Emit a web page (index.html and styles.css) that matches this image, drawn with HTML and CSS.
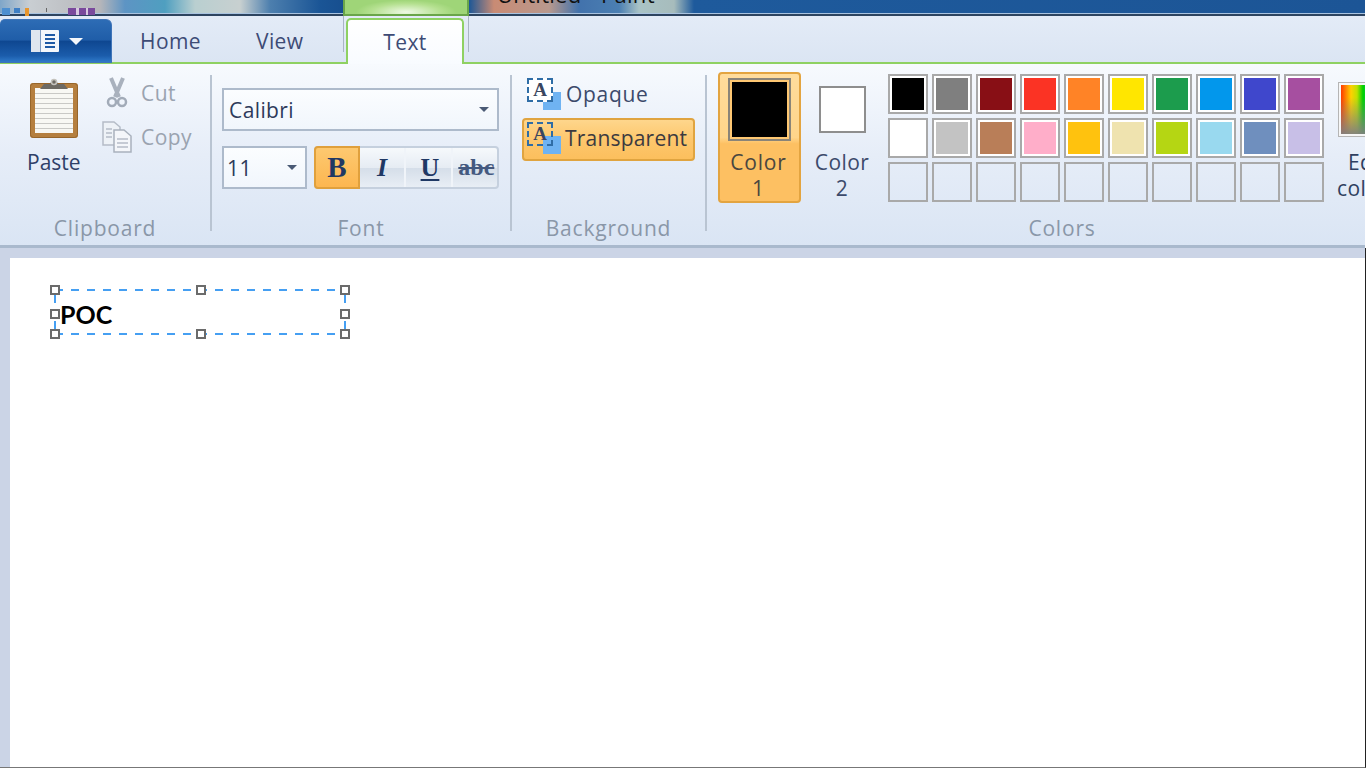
FILE: index.html
```html
<!DOCTYPE html>
<html lang="en">
<head>
  <meta charset="UTF-8">
  <title>Untitled - Paint</title>
  <link rel="stylesheet" href="styles.css">
</head>
<body>
  <div class="window">
    <div class="titlebar">
      <div class="title-left">
        <svg class="qat" width="100" height="14" viewBox="0 0 100 14">
          <rect x="2" y="0" width="8" height="7" fill="#4d8fd0"/>
          <rect x="14" y="0" width="6" height="5" fill="#3f7fc4"/>
          <rect x="25" y="0" width="4" height="10" fill="#e8962e"/>
          <rect x="46" y="0" width="1" height="4" fill="#666"/>
          <rect x="68" y="0" width="27" height="7" fill="#7a4a9c"/>
          <rect x="76" y="0" width="3" height="7" fill="#d8c8e0"/>
          <rect x="86" y="0" width="2" height="7" fill="#d8c8e0"/>
        </svg>
      </div>
      <div class="title-context"></div>
      <div class="title-right"><span class="title-text">Untitled - Paint</span></div>
    </div>

    <div class="tabs">
      <div class="app-button">
        <svg width="28" height="22" viewBox="0 0 28 22">
          <rect x="0" y="0" width="28" height="22" rx="1" fill="#f4f7fb"/>
          <rect x="0" y="0" width="9" height="22" fill="#dfe6ef"/>
          <rect x="9" y="0" width="1" height="22" fill="#7f9cc2"/>
          <path d="M14 5h10M14 9h10M14 13h10M14 17h10" stroke="#1f5aa5" stroke-width="2"/>
        </svg>
        <span class="app-arrow"></span>
      </div>
      <div class="tab tab-home">Home</div>
      <div class="tab tab-view">View</div>
      <div class="tab-edge tab-edge-left"></div>
      <div class="tab tab-active">Text</div>
      <div class="tab-edge"></div>
    </div>

    <div class="ribbon">
      <section class="group group-clipboard">
        <div class="group-body clipboard-body">
          <div class="paste">
            <svg width="52" height="60" viewBox="0 0 52 60">
              <rect x="2" y="5" width="48" height="55" rx="3" fill="#b57f3f"/>
              <rect x="2.5" y="5.5" width="47" height="54" rx="3" fill="none" stroke="#96652b"/>
              <rect x="7" y="10" width="38" height="45" fill="#f8f8f4"/>
              <path d="M7 15.5h38M7 20.5h38M7 25.5h38M7 30.5h38M7 35.5h38M7 40.5h38M7 45.5h38M7 50.5h38" stroke="#c9c9c6"/>
              <path d="M12 11l4-5h6l2-4h4l2 4h6l4 5z" fill="#6d6a64"/>
              <circle cx="26" cy="4" r="2.5" fill="none" stroke="#c4c2bc" stroke-width="1.5"/>
            </svg>
            <span class="paste-label">Paste</span>
          </div>
          <div class="small-tools">
            <div class="small-tool">
              <svg class="cut-icon" width="30" height="32" viewBox="0 0 30 32">
                <path d="M9 1l8 19M21 1l-8 19" stroke="#a9b1bd" stroke-width="4" fill="none"/>
                <circle cx="10" cy="25" r="4" fill="none" stroke="#a2abb8" stroke-width="2.5"/>
                <circle cx="20" cy="25" r="4" fill="none" stroke="#a2abb8" stroke-width="2.5"/>
              </svg>
              <span>Cut</span>
            </div>
            <div class="small-tool">
              <svg class="copy-icon" width="30" height="32" viewBox="0 0 30 32">
                <path d="M1 1h11l6 5v18H1z" fill="#eef2f7" stroke="#b5bcc7" stroke-width="1.5"/>
                <path d="M12 9h10l7 6v16H12z" fill="#f4f6fa" stroke="#a9b1bd" stroke-width="1.5"/>
                <path d="M15 18h11M15 22h11M15 26h11M4 8h6M4 12h6M4 16h6" stroke="#b5bcc7" stroke-width="1.5"/>
              </svg>
              <span>Copy</span>
            </div>
          </div>
        </div>
        <div class="group-label">Clipboard</div>
      </section>
      <div class="sep"></div>

      <section class="group group-font">
        <div class="group-body font-body">
          <div class="combo combo-family">
            <span>Calibri</span>
            <span class="combo-arrow"></span>
          </div>
          <div class="font-row">
            <div class="combo combo-size">
              <span>11</span>
              <span class="combo-arrow"></span>
            </div>
            <div class="style-buttons">
              <div class="style-btn style-on"><span class="glyph-b">B</span></div>
              <div class="style-btn"><span class="glyph-i">I</span></div>
              <div class="style-btn"><span class="glyph-u">U</span></div>
              <div class="style-btn"><span class="glyph-s">abc</span></div>
            </div>
          </div>
        </div>
        <div class="group-label">Font</div>
      </section>
      <div class="sep"></div>

      <section class="group group-background">
        <div class="group-body background-body">
          <div class="bg-option">
            <span class="bg-icon"><span class="bg-square"></span><span class="bg-frame">A</span></span>
            <span class="bg-text">Opaque</span>
          </div>
          <div class="bg-option bg-on">
            <span class="bg-icon"><span class="bg-square"></span><span class="bg-frame">A</span></span>
            <span>Transparent</span>
          </div>
        </div>
        <div class="group-label">Background</div>
      </section>
      <div class="sep"></div>

      <section class="group group-colors">
        <div class="group-body colors-body">
          <div class="color-slot color-slot-on">
            <span class="slot-swatch slot-black"></span>
            <span class="slot-label">Color<br>1</span>
          </div>
          <div class="color-slot">
            <span class="slot-swatch slot-white"></span>
            <span class="slot-label">Color<br>2</span>
          </div>
          <div class="palette">
            <span class="cell" style="--c:#000000"></span>
            <span class="cell" style="--c:#7f7f7f"></span>
            <span class="cell" style="--c:#880f15"></span>
            <span class="cell" style="--c:#fb3324"></span>
            <span class="cell" style="--c:#ff8326"></span>
            <span class="cell" style="--c:#ffe600"></span>
            <span class="cell" style="--c:#1c9c4d"></span>
            <span class="cell" style="--c:#0297ec"></span>
            <span class="cell" style="--c:#3f47cc"></span>
            <span class="cell" style="--c:#a64fa0"></span>
            <span class="cell" style="--c:#ffffff"></span>
            <span class="cell" style="--c:#c3c3c3"></span>
            <span class="cell" style="--c:#b97e58"></span>
            <span class="cell" style="--c:#ffaec9"></span>
            <span class="cell" style="--c:#ffc20e"></span>
            <span class="cell" style="--c:#efe3af"></span>
            <span class="cell" style="--c:#b5d613"></span>
            <span class="cell" style="--c:#99d9ef"></span>
            <span class="cell" style="--c:#6f8fbe"></span>
            <span class="cell" style="--c:#c8bfe7"></span>
            <span class="cell cell-empty"></span>
            <span class="cell cell-empty"></span>
            <span class="cell cell-empty"></span>
            <span class="cell cell-empty"></span>
            <span class="cell cell-empty"></span>
            <span class="cell cell-empty"></span>
            <span class="cell cell-empty"></span>
            <span class="cell cell-empty"></span>
            <span class="cell cell-empty"></span>
            <span class="cell cell-empty"></span>
          </div>
          <div class="edit-colors">
            <span class="edit-swatch"></span>
            <span class="edit-label">Edit<br>colors</span>
          </div>
        </div>
        <div class="group-label">Colors</div>
      </section>
    </div>

    <div class="workspace">
      <div class="canvas">
        <div class="selection">
          <svg class="sel-line" width="290" height="44" viewBox="0 0 290 44">
            <path d="M0 0H290M0 44H290" fill="none" stroke="#459ff2" stroke-width="2" stroke-dasharray="8 8"/>
            <path d="M0 5V13M0 31V39M290 5V13M290 31V39" fill="none" stroke="#459ff2" stroke-width="2"/>
          </svg>
          <span class="handle h-tl"></span>
          <span class="handle h-tm"></span>
          <span class="handle h-tr"></span>
          <span class="handle h-ml"></span>
          <span class="handle h-mr"></span>
          <span class="handle h-bl"></span>
          <span class="handle h-bm"></span>
          <span class="handle h-br"></span>
          <span class="sel-text">POC</span>
        </div>
      </div>
    </div>
  </div>
</body>
</html>
```

FILE: styles.css
```css
* {
  box-sizing: border-box;
}
html, body {
  margin: 0;
  height: 100%;
  overflow: hidden;
  background: #fff;
}
body {
  font-family: "Open Sans", "Noto Sans", sans-serif;
  font-size: 21px;
  letter-spacing: 0.4px;
  color: #3c4a6b;
}
.window {
  width: 1365px;
  height: 768px;
  display: flex;
  flex-direction: column;
}

/* title strip, only the lower edge of it is in the shot */
.titlebar {
  height: 16px;
  flex: none;
  display: flex;
  overflow: hidden;
}
.title-left,
.title-right {
  border-bottom: 2px solid #2d4460;
  box-shadow: inset 0 -1px 0 #a9c3e0;
}
.title-left {
  width: 343px;
  background: linear-gradient(90deg, #7fa6c9 0, #c9ced2 30px, #b6b6ba 100px, #5d94c4 125px, #4f9fc0 165px, #b9cfd0 195px, #c8d0d0 240px, #4d7fae 270px, #1a5596 320px, #174f8f 343px);
}
.title-context {
  width: 126px;
  background: radial-gradient(ellipse 50px 12px at 50% 12px, #eef9e4, #b4e08f 70%, #9fd578);
  border-left: 2px solid #6aa54a;
  border-right: 2px solid #6aa54a;
  border-bottom: 2px solid #6aa54a;
}
.title-right {
  flex: 1;
  padding-left: 28px;
  background: linear-gradient(90deg, #1d5796 0, #c98b74 25px, #b8998e 80px, #4272ac 110px, #4b7fb2 150px, #a9c3c6 170px, #a7bcbc 205px, #1e5a9c 225px, #1c5596 100%);
}
.title-text {
  display: block;
  margin-top: -15px;
  font-size: 22px;
  letter-spacing: 0.3px;
  line-height: 18px;
  color: #111;
}

/* tab row */
.tabs {
  height: 48px;
  flex: none;
  display: flex;
  align-items: flex-end;
  background: linear-gradient(#e3ebf7, #dbe5f3);
  border-bottom: 2px solid #8fd162;
  position: relative;
}
.app-button {
  width: 112px;
  height: 44px;
  margin-bottom: -1px;
  display: flex;
  align-items: center;
  justify-content: center;
  gap: 10px;
  padding-left: 2px;
  border-radius: 5px 6px 0 0;
  border: 1px solid #3f74b8;
  border-left: 0;
  background: linear-gradient(#2d6cb5 0, #1f5da8 48%, #0e4690 50%, #1b5cab 85%, #2f7ac9 100%);
}
.app-arrow {
  width: 0;
  height: 0;
  border-left: 7px solid transparent;
  border-right: 7px solid transparent;
  border-top: 7px solid #f4f7fb;
}
.tab {
  color: #3d4b75;
  height: 46px;
  line-height: 50px;
}
.tab-home {
  margin-left: 28px;
  width: 116px;
}
.tab-view {
  width: 87px;
}
.tab-active {
  width: 118px;
  height: 46px;
  margin-bottom: -2px;
  margin-left: 2px;
  text-align: center;
  background: linear-gradient(#fff, #f8fbff);
  border: 2px solid #8fd162;
  border-bottom: 0;
  border-radius: 5px 5px 0 0;
  line-height: 44px;
}
.tab-edge {
  width: 1px;
  height: 36px;
  margin-left: 4px;
  margin-bottom: 10px;
  background: #aab5c4;
}
.tab-edge-left {
  margin-left: 0;
}

/* ribbon */
.ribbon {
  height: 184px;
  flex: none;
  display: flex;
  overflow: hidden;
  background: linear-gradient(#f7fafe 0, #e6edf8 50%, #dae5f4 100%);
  border-bottom: 3px solid #a9b9cd;
}
.group {
  display: flex;
  flex-direction: column;
  flex: none;
}
.group-body {
  flex: 1;
  min-height: 0;
}
.group-label {
  height: 30px;
  margin-bottom: 2px;
  text-align: center;
  font-size: 21px;
  letter-spacing: 0.8px;
  line-height: 30px;
  color: #8a97a8;
}
.sep {
  flex: none;
  width: 2px;
  height: 156px;
  margin-top: 11px;
  background: #b9c4d2;
}
.group-clipboard {
  width: 210px;
}
.group-font {
  width: 298px;
}
.group-background {
  width: 193px;
}
.group-colors {
  flex: 1;
  min-width: 0;
}
.group-colors .group-label {
  width: 710px;
}

/* clipboard */
.clipboard-body {
  display: flex;
  padding: 14px 0 0 28px;
}
.paste {
  width: 74px;
  display: flex;
  flex-direction: column;
  color: #2e4068;
}
.paste-label {
  margin-top: 11px;
  margin-left: -1px;
  line-height: 26px;
  letter-spacing: 0;
}
.small-tools {
  display: flex;
  flex-direction: column;
  gap: 10px;
  margin-top: -2px;
}
.small-tool {
  height: 34px;
  display: flex;
  align-items: center;
  gap: 9px;
  color: #9aa3b0;
}

/* font */
.font-body {
  padding: 24px 0 0 10px;
}
.combo {
  display: flex;
  align-items: center;
  justify-content: space-between;
  height: 43px;
  padding: 0 8px 0 5px;
  background: linear-gradient(#fbfdff, #f1f6fc);
  border: 2px solid #adbacb;
  color: #2d3a5a;
}
.combo-family {
  width: 277px;
}
.combo-size {
  width: 85px;
  padding-left: 3px;
}
.combo-arrow {
  width: 0;
  height: 0;
  border-left: 5px solid transparent;
  border-right: 5px solid transparent;
  border-top: 5px solid #4a5a75;
}
.font-row {
  display: flex;
  gap: 7px;
  margin-top: 15px;
}
.style-buttons {
  width: 185px;
  height: 43px;
  display: flex;
  border: 2px solid #c5d0de;
  border-radius: 4px;
  background: linear-gradient(#f6f9fc 0, #e6ecf3 50%, #d5dee9 52%, #e8eef5 100%);
}
.style-btn {
  flex: 1;
  min-width: 0;
  display: flex;
  align-items: center;
  justify-content: center;
  border-right: 2px solid #f0f4f9;
  color: #1f3864;
  font-family: "Liberation Serif", serif;
  font-size: 26px;
  letter-spacing: 0;
}
.style-btn:last-child {
  border-right: 0;
}
.style-on {
  flex: none;
  width: 46px;
  margin: -2px 0 -2px -2px;
  background: linear-gradient(#fdc970, #fcb650);
  border: 2px solid #e0a03c;
  border-radius: 4px 0 0 4px;
}
.glyph-b {
  font-size: 29px;
  font-weight: bold;
}
.glyph-i {
  font-style: italic;
  font-weight: bold;
}
.glyph-u {
  margin-left: 3px;
  font-weight: bold;
  text-decoration: underline;
  text-underline-offset: 3px;
}
.glyph-s {
  margin-left: 3px;
  font-size: 24px;
  font-weight: bold;
  color: #44597f;
  text-decoration: line-through;
}

/* background */
.background-body {
  padding: 10px 0 0 10px;
}
.bg-option {
  width: 173px;
  height: 43px;
  display: flex;
  align-items: center;
  gap: 4px;
  padding: 0 0 4px 3px;
  margin-bottom: 1px;
  border: 2px solid transparent;
  white-space: nowrap;
}
.bg-text {
  margin-left: 1px;
  letter-spacing: 0.7px;
}
.bg-on {
  border-color: #e0a440;
  border-radius: 4px;
  background: linear-gradient(#fed68c 0, #fdc76d 50%, #fcbf5d 100%);
  color: #3c3a40;
  letter-spacing: 0.2px;
}
.bg-icon {
  position: relative;
  width: 34px;
  height: 32px;
  flex: none;
}
.bg-square {
  position: absolute;
  right: 0;
  bottom: 0;
  width: 18px;
  height: 18px;
  background: #6fb3f2;
}
.bg-frame {
  position: absolute;
  left: 0;
  top: 0;
  width: 26px;
  height: 24px;
  border: 2px dashed #2f6da6;
  background: #fff;
  font-family: "Liberation Serif", serif;
  font-weight: bold;
  font-size: 19px;
  letter-spacing: 0;
  line-height: 20px;
  text-align: center;
  color: #3a4660;
}
.bg-on .bg-frame {
  background: transparent;
}

/* colors */
.colors-body {
  display: flex;
  align-items: flex-start;
  padding-top: 8px;
  padding-left: 11px;
  position: relative;
}
.color-slot {
  width: 82px;
  height: 131px;
  display: flex;
  flex-direction: column;
  align-items: center;
  text-align: center;
  border: 2px solid transparent;
  border-radius: 4px;
  flex: none;
}
.color-slot-on {
  width: 83px;
  background: linear-gradient(#ffdc9c 0, #ffd58a 50%, #fdc062 55%, #fdc062 100%);
  border-color: #e3a440;
}
.slot-swatch {
  display: block;
  flex: none;
}
.slot-black {
  width: 63px;
  height: 63px;
  margin-top: 4px;
  background: #000;
  border: 2px solid #8a8478;
  box-shadow: inset 0 0 0 2px #ffc873;
}
.slot-white {
  width: 47px;
  height: 47px;
  margin-top: 12px;
  margin-bottom: 10px;
  background: #fff;
  border: 2px solid #8e8e8e;
}
.slot-label {
  margin-top: 6px;
  line-height: 26px;
}
.color-slot-on .slot-label {
  margin-top: 8px;
  margin-left: -2px;
  letter-spacing: 0.8px;
  color: #4a4640;
}
.palette {
  display: grid;
  grid-template-columns: repeat(10, 40px);
  grid-auto-rows: 40px;
  gap: 4px;
  margin-left: 5px;
  margin-top: 2px;
  flex: none;
}
.cell {
  border: 2px solid #a9a9a9;
  box-shadow: inset 0 0 0 2px #fff;
  background: var(--c);
}
.cell-empty {
  box-shadow: none;
  background: transparent;
}
.edit-colors {
  flex: none;
  margin-left: 14px;
  margin-top: 10px;
  width: 60px;
  text-align: center;
  white-space: nowrap;
}
.edit-swatch {
  display: block;
  width: 60px;
  height: 55px;
  border: 3px solid #f6f6f6;
  outline: 1px solid #b5b5b5;
  outline-offset: -1px;
  background: linear-gradient(rgba(128, 128, 128, 0) 25%, rgba(128, 128, 128, 0.95) 100%),
    linear-gradient(90deg, #ff3a00 0, #ffd000 10px, #c0e000 16px, #00d000 22px, #00c8a0 34px, #0090ff 54px);
}
.edit-label {
  display: block;
  margin-top: 12px;
  margin-left: -1px;
  line-height: 26px;
  color: #2f3f60;
}

/* canvas */
.workspace {
  flex: 1;
  min-height: 0;
  margin-right: -1px;
  padding: 10px 0 0 10px;
  background: #cbd4e6;
  border-right: 1px solid #222;
  border-bottom: 1px solid #777;
}
.canvas {
  height: 100%;
  background: #fff;
  position: relative;
}
.selection {
  position: absolute;
  left: 45px;
  top: 32px;
  width: 290px;
  height: 44px;
}
.sel-line {
  position: absolute;
  left: 0;
  top: 0;
  overflow: visible;
}
.handle {
  position: absolute;
  width: 10px;
  height: 10px;
  margin: -5px 0 0 -5px;
  background: #fff;
  border: 2px solid #6b6b6b;
}
.h-tl { left: 0; top: 0; }
.h-tm { left: 146px; top: 0; }
.h-tr { left: 290px; top: 0; }
.h-ml { left: 0; top: 24px; }
.h-mr { left: 290px; top: 24px; }
.h-bl { left: 0; top: 44px; }
.h-bm { left: 146px; top: 44px; }
.h-br { left: 290px; top: 44px; }
.sel-text {
  position: absolute;
  left: 5px;
  top: 8px;
  font-family: "Lato", "Liberation Sans", sans-serif;
  font-weight: bold;
  font-size: 25px;
  letter-spacing: 0;
  line-height: 32px;
  color: #000;
}
```
